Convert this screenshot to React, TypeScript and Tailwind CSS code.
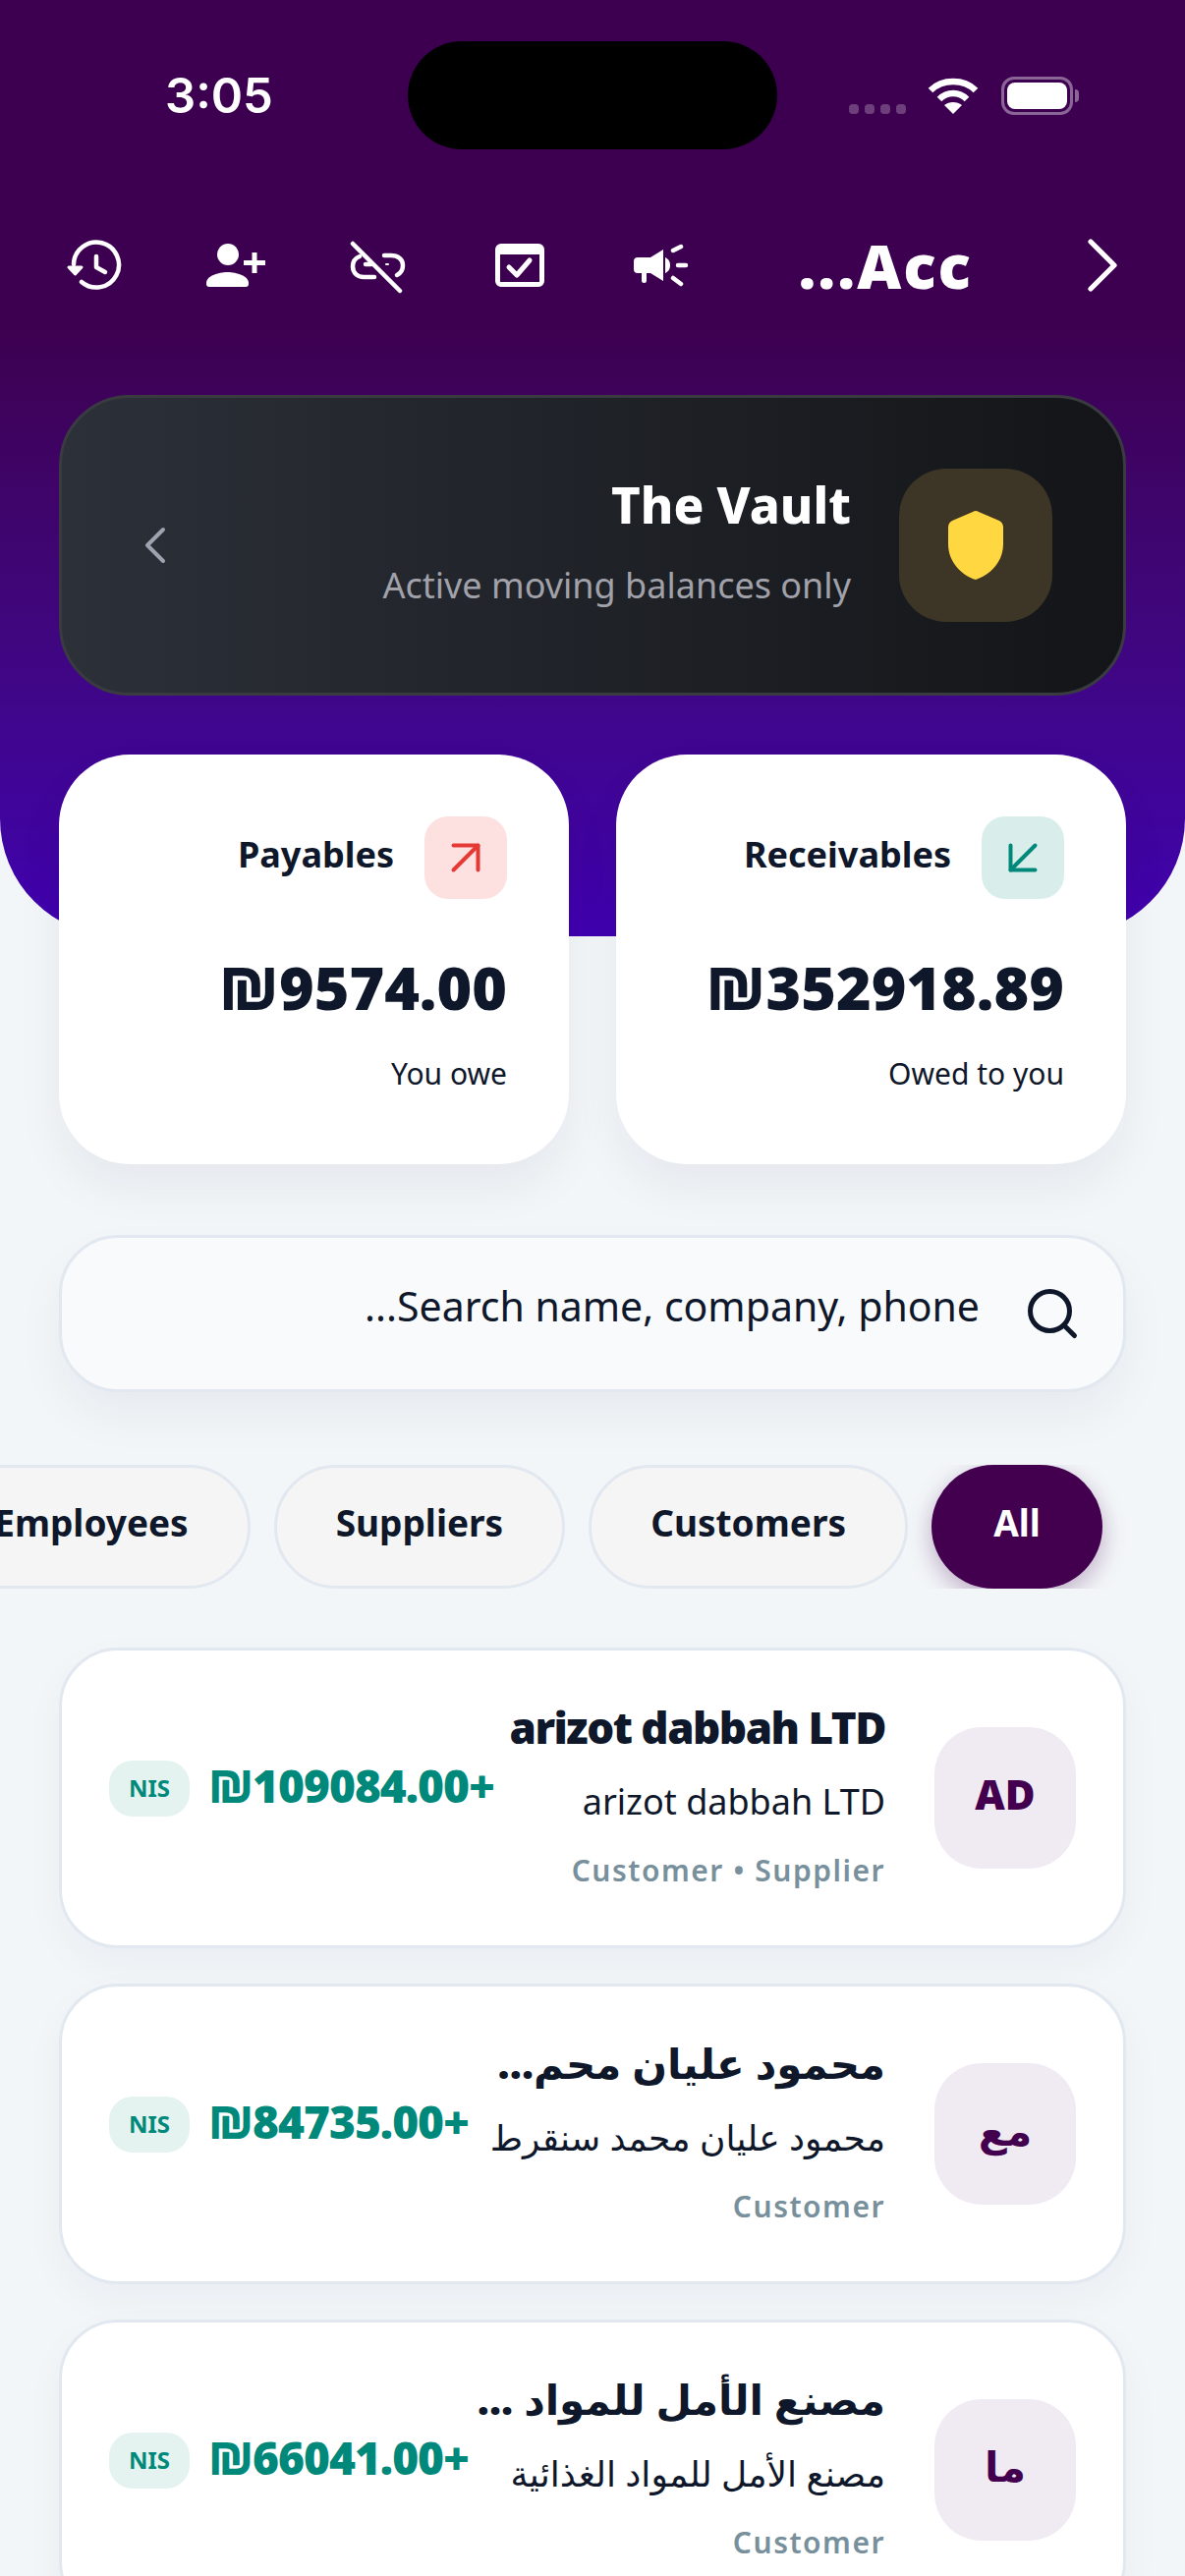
import { ArrowDownLeft, ArrowUpRight, ChevronLeft, ChevronRight, Search } from "lucide-react";

const filters = [
	{ label: "All", active: true },
	{ label: "Customers", active: false },
	{ label: "Suppliers", active: false },
	{ label: "Employees", active: false },
];

const accounts = [
	{
		initials: "AD",
		name: "arizot dabbah LTD",
		nameSize: "text-[44px]",
		company: "arizot dabbah LTD",
		tags: "Customer • Supplier",
		amount: "+₪109084.00",
	},
	{
		initials: "مع",
		name: "محمود عليان محم...",
		nameSize: "text-[42px]",
		company: "محمود عليان محمد سنقرط",
		tags: "Customer",
		amount: "+₪84735.00",
	},
	{
		initials: "ما",
		name: "مصنع الأمل للمواد ...",
		nameSize: "text-[42px]",
		company: "مصنع الأمل للمواد الغذائية",
		tags: "Customer",
		amount: "+₪66041.00",
	},
];

const StatusBar = () => (
	<div dir="ltr" className="flex items-start h-[152px] pt-[42px] pl-[168px] pr-[114px]">
		<span className="w-[247px] mt-[27px] text-[49px] leading-[58px] font-semibold text-white [font-family:'Inter',sans-serif]">
			3:05
		</span>
		<div className="w-[376px] h-[110px] rounded-[55px] bg-black" />
		<div className="flex items-end ml-auto mt-[36px] h-[39px]">
			<div className="flex gap-[6px] mb-[1px]">
				<span className="w-[10px] h-[10px] rounded-[4px] bg-white/25" />
				<span className="w-[10px] h-[10px] rounded-[4px] bg-white/25" />
				<span className="w-[10px] h-[10px] rounded-[4px] bg-white/25" />
				<span className="w-[10px] h-[10px] rounded-[4px] bg-white/25" />
			</div>
			<svg width="52" height="38" viewBox="0 0 52 38" className="ml-[22px]" fill="none" stroke="white" strokeWidth="6.5">
				<path d="M3 13C15 1 37 1 49 13" />
				<path d="M12 22C20 14 32 14 40 22" />
				<path d="M26 37 L17 28C22 24 30 24 35 28Z" fill="white" stroke="none" />
			</svg>
			<div className="relative ml-[23px] w-[73px] h-[39px] rounded-[13px] border-[3px] border-white/40 p-[3px]">
				<div className="w-full h-full rounded-[8px] bg-white" />
				<span className="absolute -right-[9px] top-[10px] w-[4px] h-[13px] rounded-r-full bg-white/40" />
			</div>
		</div>
	</div>
);

const HistoryIcon = () => (
	<svg width="72" height="72" viewBox="0 0 72 72" fill="none" stroke="white" strokeWidth="4.5" strokeLinecap="round" strokeLinejoin="round">
		<path d="M23 53A23 23 0 1 0 15 35" />
		<path d="M10 38H23L16.500 45Z" fill="white" strokeWidth="3" />
		<path d="M38 27V38L47 43" />
	</svg>
);

const PersonAddIcon = () => (
	<svg width="72" height="72" viewBox="0 0 72 72" fill="white">
		<circle cx="28" cy="25" r="11" />
		<path d="M6 54C6 47 18 43 27.500 43C37 43 49 47 49 54V55a3 3 0 0 1-3 3H9a3 3 0 0 1-3-3Z" />
		<path d="M55 23V44M44 33.500H66" stroke="white" strokeWidth="5" />
	</svg>
);

const LinkOffIcon = () => (
	<svg width="72" height="72" viewBox="0 0 72 72" fill="none" stroke="white" strokeWidth="4.5" strokeLinecap="round">
		<path d="M11 14L59 62" />
		<path d="M18 27C13 29 11 33 11 37C11 44 16 48 22 48H33" />
		<path d="M24 35H30" />
		<path d="M43 26H50C57 26 62 30 62 36C62 40 60 44 56 46" />
		<path d="M45 35H47" strokeWidth="2" />
	</svg>
);

const CalendarCheckIcon = () => (
	<svg width="72" height="72" viewBox="0 0 72 72" fill="none">
		<path
			fillRule="evenodd"
			fill="white"
			d="M18 14H56a6 6 0 0 1 6 6V52a6 6 0 0 1-6 6H18a6 6 0 0 1-6-6V20a6 6 0 0 1 6-6ZM17 25V53H57V25Z"
		/>
		<path d="M26 38L34 46L47 31" stroke="white" strokeWidth="5" strokeLinecap="round" strokeLinejoin="round" />
	</svg>
);

const CampaignIcon = () => (
	<svg width="72" height="72" viewBox="0 0 72 72" fill="white">
		<path d="M13 28H26L39 20V52L26 44H13a4 4 0 0 1-4-4V32a4 4 0 0 1 4-4Z" />
		<rect x="17" y="42" width="5" height="12" rx="2.500" />
		<path d="M41 28C45 30 46 33 46 36C46 39 45 42 41 44Z" />
		<path d="M49 21L57 17M54 36H62M49 49L57 55" stroke="white" strokeWidth="4.500" strokeLinecap="round" />
	</svg>
);

const Toolbar = () => (
	<div className="flex items-center mt-[72px] h-[92px] px-[60px]">
		<div className="flex justify-center w-[48px] shrink-0 text-white">
			<ChevronRight size={96} strokeWidth={1.3} className="shrink-0" />
		</div>
		<div className="flex-1 min-w-0 mr-[108px] text-[62px] leading-[80px] font-black tracking-[2px] text-white">Acc...</div>
		<div className="flex gap-[72px]">
			<CampaignIcon />
			<CalendarCheckIcon />
			<LinkOffIcon />
			<PersonAddIcon />
			<HistoryIcon />
		</div>
	</div>
);

const VaultCard = () => (
	<div className="flex items-center h-[306px] mx-[60px] mt-[86px] pr-[72px] pl-[63px] rounded-[72px] border-[3px] border-[#3a3b40] bg-gradient-to-r from-[#2c3038] to-[#131518]">
		<div className="flex items-center justify-center w-[156px] h-[156px] rounded-[48px] bg-[#3d3626]">
			<svg width="56" height="70" viewBox="0 0 56 70" fill="#ffd740">
				<path d="M25 1Q28 -1 31 1L52 10Q56 12 56 17V34C56 52 42 66 28 70C14 66 0 52 0 34V17Q0 12 4 10Z" />
			</svg>
		</div>
		<div className="mr-[49px] pb-[10px] flex flex-col gap-[27px]">
			<span className="text-[51px] leading-[64px] font-extrabold text-white">The Vault</span>
			<span className="text-[36px] leading-[48px] text-[#a1a1aa]">Active moving balances only</span>
		</div>
		<ChevronLeft size={64} strokeWidth={1.5} className="mr-auto text-[#9ca3af]" />
	</div>
);

type StatProps = {
	label: string;
	amount: string;
	note: string;
	tile: string;
	children: React.ReactNode;
};

const StatCard = ({ label, amount, note, tile, children }: StatProps) => (
	<div className="flex-1 h-[417px] px-[63px] pt-[63px] rounded-[72px] bg-white shadow-[0_24px_48px_rgba(15,23,42,0.06)]">
		<div className="flex items-center gap-[31px]">
			<div className={`flex items-center justify-center w-[84px] h-[84px] rounded-[24px] ${tile}`}>{children}</div>
			<span className="-mt-[6px] text-[36px] leading-[48px] font-bold text-[#0f172a]">{label}</span>
		</div>
		<div className="mt-[45px] text-[61px] leading-[90px] font-black text-[#0f172a]">{amount}</div>
		<div className="mt-[20px] text-[30px] leading-[46px] text-[#0f172a]">{note}</div>
	</div>
);

const StatCards = () => (
	<div className="relative flex gap-[48px] mx-[60px] -mt-[185px]">
		<StatCard label="Receivables" amount="₪352918.89" note="Owed to you" tile="bg-[#d9eeea]">
			<ArrowDownLeft size={60} strokeWidth={1.6} className="text-[#00897b]" />
		</StatCard>
		<StatCard label="Payables" amount="₪9574.00" note="You owe" tile="bg-[#fde0e0]">
			<ArrowUpRight size={60} strokeWidth={1.6} className="text-[#e53935]" />
		</StatCard>
	</div>
);

const SearchBar = () => (
	<div className="flex items-center h-[160px] mx-[60px] mt-[72px] pr-[42px] rounded-[60px] border-[3px] border-[#e2e8f0] bg-[#f8fafc] shadow-[0_24px_48px_rgba(15,23,42,0.05)]">
		<Search size={60} strokeWidth={2} className="text-[#0f172a]" />
		<span className="mr-[44px] -mt-[16px] text-[41px] leading-[56px] text-[#0f172a]">Search name, company, phone...</span>
	</div>
);

const FilterRow = () => (
	<div className="flex gap-[24px] h-[126px] mt-[74px] pr-[84px] overflow-hidden">
		{filters.map((filter) =>
			filter.active ? (
				<div
					key={filter.label}
					className="flex shrink-0 items-center justify-center w-[174px] h-[126px] pb-[8px] rounded-full bg-[#42004f] text-[37px] font-bold text-white shadow-[0_8px_24px_rgba(66,0,79,0.3)]"
				>
					{filter.label}
				</div>
			) : (
				<div
					key={filter.label}
					className="flex shrink-0 items-center justify-center px-[60px] h-[126px] pb-[8px] rounded-full border-[3px] border-[#e2e8f0] bg-[#f5f5f5] text-[37px] font-bold text-[#0f172a]"
				>
					{filter.label}
				</div>
			),
		)}
	</div>
);

type Account = (typeof accounts)[number];

const AccountRow = ({ account }: { account: Account }) => (
	<div className="flex items-center shrink-0 h-[306px] px-[48px] rounded-[60px] border-[3px] border-[#e2e8f0] bg-white shadow-[0_16px_40px_rgba(15,23,42,0.04)]">
		<div className="flex shrink-0 items-center justify-center w-[144px] h-[144px] pb-[10px] rounded-[48px] bg-[#f0eaf3] text-[42px] font-black text-[#42004f]">
			{account.initials}
		</div>
		<div className="flex-1 min-w-0 mr-[50px] pb-[8px] flex flex-col whitespace-nowrap">
			<span className={`${account.nameSize} leading-[60px] font-black tracking-[-1.5px] text-[#0f172a]`}>{account.name}</span>
			<span className="mt-[21px] text-[36px] leading-[50px] text-[#0f172a]">{account.company}</span>
			<span className="mt-[24px] text-[30px] leading-[42px] font-semibold tracking-[1.5px] text-[#78909c]">{account.tags}</span>
		</div>
		<div className="mb-[20px] flex shrink-0 items-center gap-[19px] whitespace-nowrap">
			<span className="pb-[6px] text-[46px] leading-[60px] font-black tracking-[-1px] text-[#00897b]">{account.amount}</span>
			<span className="flex items-center justify-center w-[82px] h-[57px] rounded-[24px] bg-[#e4f3f0] text-[24px] font-bold text-[#00897b]">
				NIS
			</span>
		</div>
	</div>
);

export default function App() {
	return (
		<div
			dir="rtl"
			className="h-[2622px] overflow-hidden bg-[#f3f6f9] [font-family:'Noto_Sans','DejaVu_Sans',sans-serif]"
		>
			<div className="h-[953px] rounded-b-[120px] bg-gradient-to-b from-[#3d0050] from-[35%] to-[#4000b0]">
				<StatusBar />
				<Toolbar />
				<VaultCard />
			</div>
			<StatCards />
			<SearchBar />
			<FilterRow />
			<div className="flex flex-col gap-[36px] mx-[60px] mt-[60px]">
				{accounts.map((account) => (
					<AccountRow key={account.initials} account={account} />
				))}
			</div>
		</div>
	);
}
